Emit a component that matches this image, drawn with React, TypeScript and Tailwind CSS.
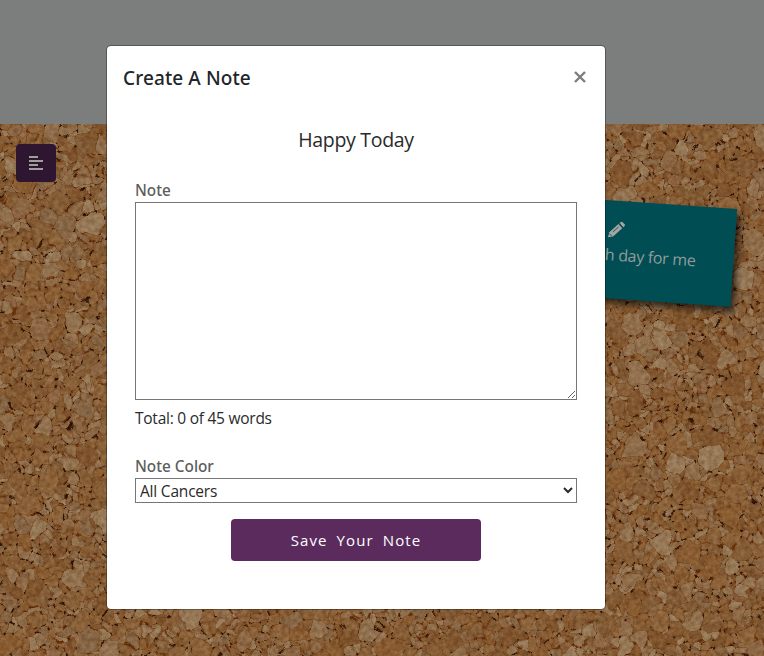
import React from "react";

type Pt = [number, number];
type Chip = { x: number; y: number; r: number };

const W = 764;
const H = 532;

function makeRandom(seed: number) {
  let s = seed;
  return () => {
    s = (s + 0x6d2b79f5) | 0;
    let t = Math.imul(s ^ (s >>> 15), 1 | s);
    t = (t + Math.imul(t ^ (t >>> 7), 61 | t)) ^ t;
    return ((t ^ (t >>> 14)) >>> 0) / 4294967296;
  };
}

// Chips of mixed size, packed without overlap, then grown to fill the board.
function buildCork() {
  const rnd = makeRandom(77);
  const cell = 28;
  const cols = Math.ceil((W + 60) / cell) + 1;
  const buckets = new Map<number, Chip[]>();
  const key = (x: number, y: number) => Math.floor((y + 30) / cell) * cols + Math.floor((x + 30) / cell);
  const near = (x: number, y: number) => {
    const k = key(x, y);
    const out: Chip[] = [];
    for (let j = -1; j <= 1; j++)
      for (let i = -1; i <= 1; i++) out.push(...(buckets.get(k + j * cols + i) || []));
    return out;
  };
  const chips: Chip[] = [];
  const passes: [number, number][] = [[11, 170], [8, 600], [5.5, 1600], [3.6, 5000], [2.2, 12000]];
  for (const [r, tries] of passes) {
    for (let n = 0; n < tries; n++) {
      const x = rnd() * (W + 40) - 20;
      const y = rnd() * (H + 40) - 20;
      if (near(x, y).some((c) => (c.x - x) ** 2 + (c.y - y) ** 2 < ((c.r + r) * 0.85) ** 2)) continue;
      const c = { x, y, r };
      chips.push(c);
      const k = key(x, y);
      if (!buckets.has(k)) buckets.set(k, []);
      buckets.get(k)!.push(c);
    }
  }
  const palette = ["#886039", "#8b6644", "#845c35", "#8e6c4a", "#805a35", "#875b31", "#90704f", "#7e542e", "#8a6139", "#856545", "#957857"];
  const shapes: { d: string; fill: string }[] = [];
  let specks = "";
  let rust = "";
  for (const c of chips) {
    let poly: Pt[] = [[c.x - 20, c.y - 20], [c.x + 20, c.y - 20], [c.x + 20, c.y + 20], [c.x - 20, c.y + 20]];
    for (const o of near(c.x, c.y)) {
      if (o === c) continue;
      const dx = o.x - c.x;
      const dy = o.y - c.y;
      const lim = (dx * dx + dy * dy + c.r * c.r - o.r * o.r) / 2;
      const next: Pt[] = [];
      for (let i = 0; i < poly.length; i++) {
        const a = poly[i];
        const b = poly[(i + 1) % poly.length];
        const da = (a[0] - c.x) * dx + (a[1] - c.y) * dy - lim;
        const db = (b[0] - c.x) * dx + (b[1] - c.y) * dy - lim;
        if (da <= 0) next.push(a);
        if (da * db < 0) {
          const t = da / (da - db);
          next.push([a[0] + (b[0] - a[0]) * t, a[1] + (b[1] - a[1]) * t]);
        }
      }
      poly = next;
    }
    if (poly.length < 3) continue;
    const d = "M" + poly.map((p) => p[0].toFixed(1) + " " + p[1].toFixed(1)).join("L") + "Z";
    shapes.push({ d, fill: palette[Math.floor(rnd() * palette.length)] });
    for (const p of poly) {
      const q = rnd();
      const w = 0.6 + rnd() * 1.5;
      const h = 0.6 + rnd() * 1.4;
      const s = `M${(p[0] - w).toFixed(1)} ${p[1].toFixed(1)}l${w.toFixed(1)} ${(-h).toFixed(1)}l${w.toFixed(1)} ${h.toFixed(1)}l${(-w).toFixed(1)} ${h.toFixed(1)}Z`;
      if (q < 0.11) specks += s;
      else if (q < 0.3) rust += s;
    }
  }
  return { shapes, specks, rust };
}

const cork = buildCork();

function CorkBoard() {
  return (
    <svg className="block h-[532px] w-[764px]" viewBox="0 0 764 532" aria-hidden="true">
      <defs>
        <filter id="rough" x="0" y="0" width="764" height="532" filterUnits="userSpaceOnUse" colorInterpolationFilters="sRGB">
          <feTurbulence type="fractalNoise" baseFrequency="0.06" numOctaves="2" seed="4" result="n" />
          <feDisplacementMap in="SourceGraphic" in2="n" scale="17" xChannelSelector="R" yChannelSelector="G" result="chips" />
          <feTurbulence type="fractalNoise" baseFrequency="0.22" numOctaves="3" seed="9" />
          <feColorMatrix type="matrix" values="0.45 0 0 0 0.29  0.45 0 0 0 0.28  0.45 0 0 0 0.27  0 0 0 0 1" result="grain" />
          <feBlend in="grain" in2="chips" mode="soft-light" />
        </filter>
      </defs>
      <rect width="764" height="532" fill="#805a36" />
      <g filter="url(#rough)">
        <rect x="-10" y="-10" width="784" height="552" fill="#6d4420" />
        {cork.shapes.map((s, i) => (
          <path key={i} d={s.d} fill={s.fill} stroke="#734822" strokeWidth="0.6" />
        ))}
        <path d={cork.rust} fill="#642e0a" />
        <path d={cork.specks} fill="#2e1406" />
      </g>
    </svg>
  );
}

export default function App() {
  return (
    <div className="relative h-[656px] w-[764px] overflow-hidden bg-[#7c7e7d] font-['Open_Sans','Noto_Sans',sans-serif]">
      <div className="h-[124px]" />
      <CorkBoard />

      <button className="absolute left-4 top-36 flex h-[38px] w-10 items-center justify-center rounded bg-[#2e1630]" aria-label="Menu">
        <svg className="translate-x-0" width="14" height="14" viewBox="0 0 14 14" fill="#a09e9c" shapeRendering="crispEdges">
          <path d="M0 0h9v2H0zM0 4h14v2H0zM0 8h9v2H0zM0 12h14v2H0z" />
        </svg>
      </button>

      <div className="absolute left-[534px] top-[202px] h-[98px] w-[200px] rotate-[4deg] bg-[#004e54] shadow-[4px_5px_7px_rgba(0,0,0,0.65)]">
        <svg className="absolute left-[72px] top-[20px] -rotate-[1deg]" width="18" height="18" viewBox="0 0 18 18">
          <path d="M1 17l1-5L10.7 3.3l4 4L6 16z" fill="#a5a5a2" />
          <path d="M11.8 2.2l1-1q1-.8 2 0l2 2q.8 1 0 2l-1 1z" fill="#a5a5a2" />
          <path d="M5.5 11.5l5.5-5.5M2.2 13.2l2.6 2.6" stroke="#004e54" strokeWidth="0.8" />
        </svg>
        <p className="absolute right-[38px] top-[42px] whitespace-nowrap text-[16px] leading-6 tracking-[-0.3px] text-[#929b97]">
          h day for me
        </p>
      </div>

      <section className="absolute left-[106px] top-[45px] flex h-[565px] w-[500px] flex-col rounded-[5px] border border-black/30 bg-white bg-clip-padding">
        <header className="flex h-[62px] items-start justify-between px-4 pt-[17px]">
          <h5 className="font-['Noto_Sans','Open_Sans',sans-serif] text-[19px] font-medium leading-[30px] tracking-[0.1px] text-[#212529]">Create A Note</h5>
          <button className="mr-[3px] mt-[8px]" aria-label="Close">
            <svg width="12" height="12" viewBox="0 0 12 12" fill="none" stroke="#7d7d7d" strokeWidth="2.4">
              <path d="M1 1l10 10M11 1L1 11" />
            </svg>
          </button>
        </header>
        <div className="flex flex-col px-7 pt-[17px]">
          <p className="text-center text-[19.5px] leading-[30px] tracking-[-0.3px] text-[#2a2a2a]">Happy Today</p>
          <label className="mt-[23px] font-['Noto_Sans','Open_Sans',sans-serif] text-[15.3px] font-medium leading-6 text-[#5d5d5d]">Note</label>
          <textarea className="block h-[198px] w-[442px] resize rounded-none border border-[#767676] bg-white" />
          <p className="mt-[6px] text-[15.5px] leading-6 tracking-[-0.25px] text-[#2a2a2a]">Total: 0 of 45 words</p>
          <label className="mt-6 font-['Noto_Sans','Open_Sans',sans-serif] text-[15.3px] font-medium leading-6 text-[#5d5d5d]">Note Color</label>
          <select className="h-[25px] w-[442px] rounded-none border border-[#767676] bg-white text-[15.5px] tracking-[-0.2px] text-[#2a2a2a]">
            <option>All Cancers</option>
          </select>
          <button className="mt-4 h-[42px] w-[250px] self-center rounded bg-[#5b2b5e] text-[15px] tracking-[1.1px] text-white [word-spacing:4px]">
            Save Your Note
          </button>
        </div>
      </section>
    </div>
  );
}
